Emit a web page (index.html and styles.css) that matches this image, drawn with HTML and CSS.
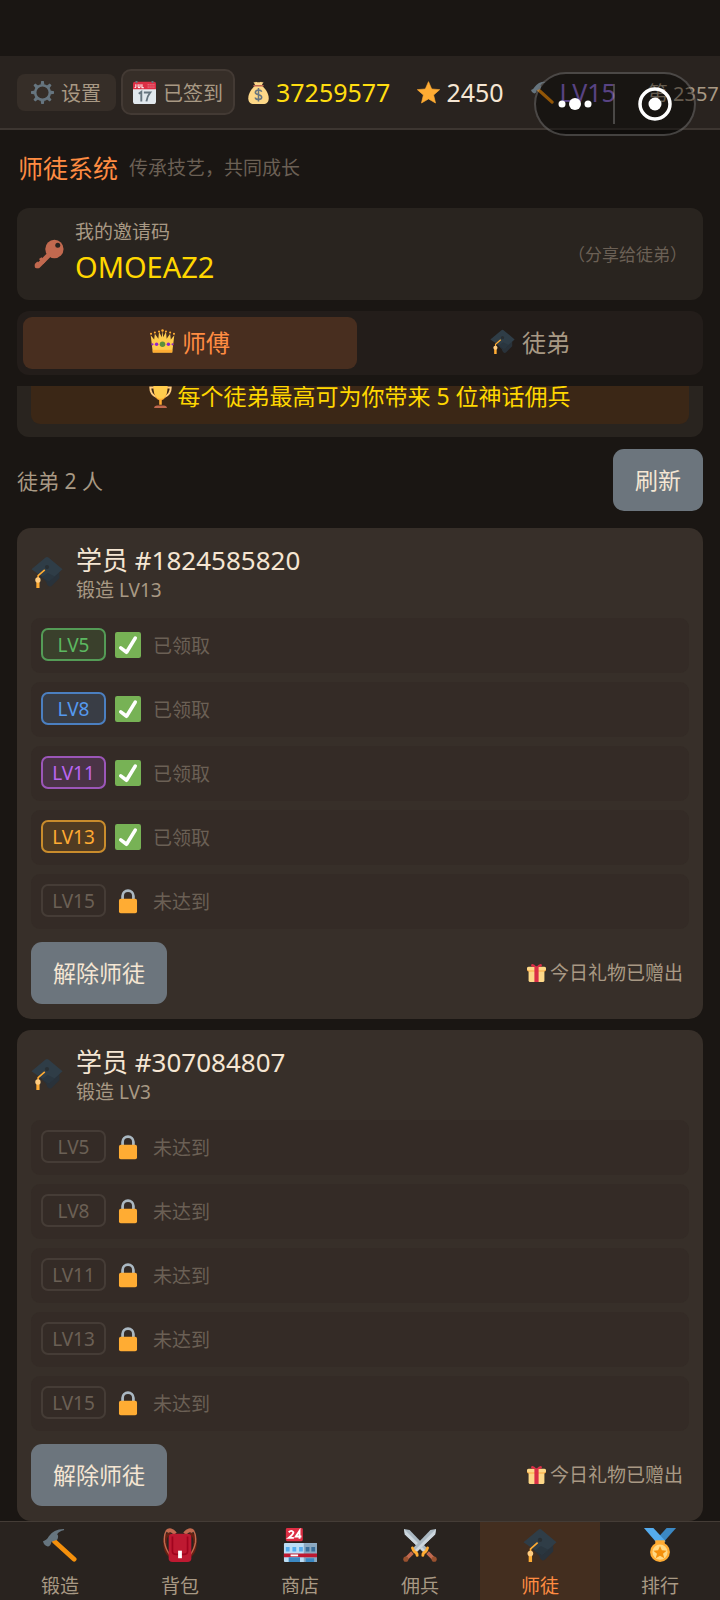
FILE: index.html
```html
<!DOCTYPE html>
<html lang="zh-CN">
<head>
<meta charset="utf-8">
<meta name="viewport" content="width=device-width, initial-scale=1">
<title>师徒系统</title>
<link rel="stylesheet" href="styles.css">
</head>
<body>
<svg class="sprite" aria-hidden="true">
  <symbol id="gear" viewBox="0 0 36 36">
    <g fill="#66757f"><g id="teeth"><path d="M16 0h4l1 6h-6zM16 36h4l1-6h-6z"/><path d="M0 16v4l6 1v-6zM36 16v4l-6 1v-6z"/></g><use href="#teeth" transform="rotate(45 18 18)"/></g>
    <circle cx="18" cy="18" r="11.500" fill="none" stroke="#66757f" stroke-width="4"/>
  </symbol>
  <symbol id="calendar" viewBox="0 0 36 36">
    <path d="M0 11h36v21a4 4 0 0 1-4 4H4a4 4 0 0 1-4-4z" fill="#e1e8ed"/>
    <path d="M0 13V4a3 3 0 0 1 3-3h30a3 3 0 0 1 3 3v9z" fill="#dd2e44"/>
    <path d="M4 0h3v3H4zM29 0h3v3h-3z" fill="#66757f"/>
    <path d="M4.500 5v4q0 1.500-2 1M8 5v4q0 1.500 1.500 1.500T11 9V5M14 5v5.500h3" fill="none" stroke="#fff" stroke-width="1.600"/>
    <path d="M23 6h11M23 9.500h11" stroke="#f4abba" stroke-width="1.500" stroke-dasharray="1.500 1.500"/>
    <path d="M9 20l4-3v15M17 18h10q-5 6-6 14" fill="none" stroke="#66757f" stroke-width="3"/>
  </symbol>
  <symbol id="moneybag" viewBox="0 0 36 36">
    <path d="M12 8h12c4 4 10 11 10 19 0 6-3 9-9 9H11c-6 0-9-3-9-9 0-8 6-15 10-19z" fill="#fdd888"/>
    <path d="M10 1q2 2 4 0 4 2 8 0 2 2 4 0l-3 6H13z" fill="#fdd888"/>
    <path d="M11 7.500h14" stroke="#bf6952" stroke-width="2.500" stroke-linecap="round"/>
    <path d="M23 17q-1-3-5-3t-5 3.500q0 3 5 4t5 4q0 3.500-5 3.500t-5-3M18 11v21" fill="none" stroke="#67757f" stroke-width="2.400"/>
  </symbol>
  <symbol id="star" viewBox="0 0 36 36">
    <path d="M18 1l5 11.500 12.500 1-9.500 8.500 3 12.500L18 28 7 34.500 10 22 .5 13.500l12.500-1z" fill="#ffac33" stroke="#ffac33" stroke-linejoin="round"/>
  </symbol>
  <symbol id="hammer" viewBox="0 0 36 36">
    <path d="M12 14l21 19" stroke="#f4900c" stroke-width="5" stroke-linecap="round"/>
    <path d="M0 14q4-1 6-5Q11 1 22 1q1 .5 0 1.500-5 1-7 4 2 2 0 6l-6 2q-1 5-4 5-4-1-5-5.500z" fill="#66757f"/>
  </symbol>
  <symbol id="key" viewBox="0 0 36 36">
    <path d="M20 17L5 32" stroke="#c1694f" stroke-width="6" stroke-linecap="round"/>
    <path d="M1 30l3-3 4 4-4 4q-4 1-3-5zM6 24l3-2 5 5-3 3z" fill="#c1694f"/>
    <circle cx="24.500" cy="12" r="11" fill="#c1694f"/>
    <circle cx="28.500" cy="7.500" r="3" fill="#292420"/>
  </symbol>
  <symbol id="crown" viewBox="0 0 36 36">
    <path d="M4 34L1 9l5 6 1-8 5 7 1-10 4 8 1-10 1 10 4-8 1 10 5-7 1 8 5-6-3 25z" fill="#ffcc4d"/>
    <path d="M4 30h28v4H4z" fill="#ffac33"/>
    <g fill="#ffac33"><circle cx="1.500" cy="7" r="1.500"/><circle cx="7" cy="5" r="1.500"/><circle cx="13" cy="3.500" r="1.500"/><circle cx="18" cy="2" r="1.800"/><circle cx="23" cy="3.500" r="1.500"/><circle cx="29" cy="5" r="1.500"/><circle cx="34.500" cy="7" r="1.500"/></g>
    <circle cx="18" cy="22" r="4" fill="#5c913b"/>
    <g fill="#9226c9"><circle cx="9.500" cy="22" r="2.500"/><circle cx="26.500" cy="22" r="2.500"/><circle cx="3.500" cy="22" r="1.600"/><circle cx="32.500" cy="22" r="1.600"/></g>
  </symbol>
  <symbol id="cap" viewBox="0 0 36 36">
    <path d="M8 20l9 9q2 7 6 5l9-9V15z" fill="#29323a"/>
    <path d="M.5 15L16 2q2-2 4 0l15.500 13L22 27q-2 2-4 0z" fill="#2f3d47"/>
    <path d="M12 24l7-5 8 4-5 4q-2 2-4 0z" fill="#2a363f"/>
    <circle cx="18" cy="12.500" r="2.300" fill="#292f33"/>
    <path d="M15.500 15.500L8 22v7" fill="none" stroke="#ffac33" stroke-width="1.800"/>
    <path d="M6 28h3.600v8H6z" fill="#ffac33"/><circle cx="7.800" cy="27" r="3" fill="#ffcc80"/>
  </symbol>
  <symbol id="trophy" viewBox="0 0 36 36">
    <path d="M9 4H2q0 11 10 15M27 4h7q0 11-10 15" fill="none" stroke="#ffcc80" stroke-width="3"/>
    <path d="M7 1h22q0 20-9 23v7h-4v-7Q7 21 7 1z" fill="#ffac33"/>
    <path d="M7 1h22q0 13-5 18-6 5-12 0Q7 14 7 1z" fill="#ffcc4d"/>
    <path d="M8 36q0-4 5-4h10q5 0 5 4z" fill="#c1694f"/>
  </symbol>
  <symbol id="check" viewBox="0 0 36 36">
    <rect width="36" height="36" rx="3" fill="#77b255"/>
    <path d="M8 22l8 6L28 8.500" fill="none" stroke="#fff" stroke-width="5" stroke-linecap="round" stroke-linejoin="round"/>
  </symbol>
  <symbol id="lock" viewBox="0 0 36 36">
    <path d="M10.500 18v-7a7.500 7.500 0 0 1 15 0v7" fill="none" stroke="#aab8c2" stroke-width="3.800"/>
    <rect x="5.500" y="15" width="25" height="20" rx="2.500" fill="#ffac33"/>
  </symbol>
  <symbol id="gift" viewBox="0 0 36 36">
    <path d="M3 14h30v19a3 3 0 0 1-3 3H6a3 3 0 0 1-3-3z" fill="#fdd888"/>
    <rect y="8" width="36" height="8" rx="3" fill="#fcab40"/>
    <rect y="7" width="36" height="7" rx="3" fill="#fdd888"/>
    <path d="M14 7h8v29h-8z" fill="#da2f47"/>
    <path d="M18 7Q6 9 8 3q3-4 10 4zM18 7q12 2 10-4-3-4-10 4z" fill="#da2f47"/>
  </symbol>
  <symbol id="backpack" viewBox="0 0 36 36">
    <path d="M8 6Q2 7 2 15q0 10 5 14M28 6q6 1 6 9 0 10-5 14" fill="none" stroke="#662113" stroke-width="3.500"/>
    <path d="M13 5Q6-1 3 4 1 8 1.500 15 3 23 7 28M23 5q7-6 10-1 2 4 1.500 11Q33 23 29 28" fill="none" stroke="#c1694f" stroke-width="1.500"/>
    <path d="M13 6Q8 0 4 4M23 6q5-6 9-2" fill="none" stroke="#c1694f" stroke-width="4"/>
    <rect x="6" y="6" width="24" height="30" rx="4" fill="#be1931"/>
    <path d="M10 9v16q0 3 4 3h8q4 0 4-3V9" fill="none" stroke="#a0041e" stroke-width="1.800"/>
    <rect x="16" y="24" width="4" height="8" fill="#fff"/>
  </symbol>
  <symbol id="shop" viewBox="0 0 36 36">
    <rect x="1" y="16" width="35" height="20" rx="1" fill="#bbddf5"/>
    <path d="M22 16h14v20H22z" fill="#8ba9c1"/>
    <path d="M3 20h4v5H3zM10 20h4v5h-4zM17 20h4v5h-4z" fill="#55acee"/>
    <path d="M24 20h4v5h-4zM30 20h4v5h-4z" fill="#3b6e99"/>
    <path d="M1 27h35v4H1z" fill="#be1931"/><path d="M8 29h8" stroke="#fff" stroke-width="2"/>
    <path d="M6 31h12v5H6zM24 32h9v4h-9z" fill="#3b88c3"/>
    <rect x="3" width="18" height="14" rx="1.500" fill="#dd2e44"/>
    <path d="M6 4.500q3-3 5 0 0 2-5 6h5.500M17.500 11.500V3l-4 6h6" fill="none" stroke="#fff" stroke-width="2"/>
  </symbol>
  <symbol id="swords" viewBox="0 0 36 36">
    <g id="sword"><path d="M1 1l6 1 19 20-4 4L2 7z" fill="#aab8c2"/><path d="M1 1l1 6 20 19 2-2z" fill="#ccd6dd"/><path d="M26 26l6 6" stroke="#c1694f" stroke-width="4"/><path d="M21 29q0-3 3-4 1-1 2-4" fill="none" stroke="#ffac33" stroke-width="3" stroke-linecap="round"/><circle cx="33" cy="33" r="2.700" fill="#99512f"/></g>
    <use href="#sword" transform="matrix(-1 0 0 1 36 0)"/>
  </symbol>
  <symbol id="medal" viewBox="0 0 36 36">
    <path d="M35 0H25L15 11l6 5z" fill="#3b88c3"/><path d="M1 0h10l13 14-5 3-5-2z" fill="#55acee"/>
    <path d="M13 13h10v5H13z" fill="#ffac33"/>
    <circle cx="18" cy="25.500" r="10.500" fill="#ffac33"/><circle cx="18" cy="25.500" r="8" fill="#ffd983"/>
    <path d="M18 19l2 4.500 5 .5-3.800 3.200 1.300 4.800-4.500-2.600-4.500 2.600 1.300-4.800L11 24l5-.5z" fill="#f4900c"/>
  </symbol>
</svg>

<div class="app">
  <header class="topbar">
    <button class="chip"><svg class="icon-sm"><use href="#gear"/></svg>设置</button>
    <button class="chip chip-signed"><svg class="icon-sm"><use href="#calendar"/></svg>已签到</button>
    <div class="stats">
      <span class="stat gold"><svg class="icon-sm"><use href="#moneybag"/></svg>37259577</span>
      <span class="stat"><svg class="icon-sm"><use href="#star"/></svg>2450</span>
      <span class="stat level"><svg class="icon-sm"><use href="#hammer"/></svg>LV15</span>
      <span class="rank">第 2357</span>
    </div>
  </header>

  <div class="capsule">
    <button class="capsule-btn" aria-label="更多"><svg class="dots" viewBox="0 0 34 14"><g fill="#fff"><circle cx="4" cy="7" r="3.500"/><circle cx="17" cy="7" r="6"/><circle cx="30" cy="7" r="3.500"/></g></svg></button>
    <button class="capsule-btn" aria-label="关闭"><svg class="target" viewBox="0 0 34 34"><circle cx="17" cy="17" r="15" fill="none" stroke="#fff" stroke-width="3.500"/><circle cx="17" cy="17" r="6.500" fill="#fff"/></svg></button>
  </div>

  <main class="page">
    <div class="heading"><h1>师徒系统</h1><p>传承技艺，共同成长</p></div>

    <section class="invite">
      <svg class="icon-key"><use href="#key"/></svg>
      <div class="invite-main"><div class="invite-label">我的邀请码</div><div class="invite-code">OMOEAZ2</div></div>
      <span class="invite-hint">（分享给徒弟）</span>
    </section>

    <nav class="tabs">
      <button class="tab active"><svg class="icon-tab"><use href="#crown"/></svg>师傅</button>
      <button class="tab"><svg class="icon-tab"><use href="#cap"/></svg>徒弟</button>
    </nav>

    <div class="scroller">
      <section class="promo"><div class="promo-line"><svg class="icon-sm"><use href="#trophy"/></svg>每个徒弟最高可为你带来 5 位神话佣兵</div></section>

      <div class="summary"><span>徒弟 2 人</span><button class="btn">刷新</button></div>

      <article class="card">
        <div class="card-head"><svg class="icon-lg"><use href="#cap"/></svg><div><h2>学员 #1824585820</h2><p>锻造 LV13</p></div></div>
        <ul class="rewards">
          <li><span class="badge green">LV5</span><svg class="icon-md"><use href="#check"/></svg>已领取</li>
          <li><span class="badge blue">LV8</span><svg class="icon-md"><use href="#check"/></svg>已领取</li>
          <li><span class="badge purple">LV11</span><svg class="icon-md"><use href="#check"/></svg>已领取</li>
          <li><span class="badge orange">LV13</span><svg class="icon-md"><use href="#check"/></svg>已领取</li>
          <li><span class="badge">LV15</span><svg class="icon-md"><use href="#lock"/></svg>未达到</li>
        </ul>
        <div class="card-foot"><button class="btn">解除师徒</button><span class="gift"><svg class="icon-xs"><use href="#gift"/></svg>今日礼物已赠出</span></div>
      </article>

      <article class="card">
        <div class="card-head"><svg class="icon-lg"><use href="#cap"/></svg><div><h2>学员 #307084807</h2><p>锻造 LV3</p></div></div>
        <ul class="rewards">
          <li><span class="badge">LV5</span><svg class="icon-md"><use href="#lock"/></svg>未达到</li>
          <li><span class="badge">LV8</span><svg class="icon-md"><use href="#lock"/></svg>未达到</li>
          <li><span class="badge">LV11</span><svg class="icon-md"><use href="#lock"/></svg>未达到</li>
          <li><span class="badge">LV13</span><svg class="icon-md"><use href="#lock"/></svg>未达到</li>
          <li><span class="badge">LV15</span><svg class="icon-md"><use href="#lock"/></svg>未达到</li>
        </ul>
        <div class="card-foot"><button class="btn">解除师徒</button><span class="gift"><svg class="icon-xs"><use href="#gift"/></svg>今日礼物已赠出</span></div>
      </article>
    </div>
  </main>

  <nav class="bottom-nav">
    <button class="nav-item"><svg class="icon-nav"><use href="#hammer"/></svg>锻造</button>
    <button class="nav-item"><svg class="icon-nav"><use href="#backpack"/></svg>背包</button>
    <button class="nav-item"><svg class="icon-nav"><use href="#shop"/></svg>商店</button>
    <button class="nav-item"><svg class="icon-nav"><use href="#swords"/></svg>佣兵</button>
    <button class="nav-item active"><svg class="icon-nav"><use href="#cap"/></svg>师徒</button>
    <button class="nav-item"><svg class="icon-nav"><use href="#medal"/></svg>排行</button>
  </nav>
</div>
</body>
</html>
```

FILE: styles.css
```css
* { box-sizing: border-box; margin: 0; padding: 0; }
body {
  background: #1a1613;
  color: #f5e6d3;
  font-family: "Noto Sans", "Noto Sans CJK SC", sans-serif;
  font-size: 19px;
}
button { font: inherit; color: inherit; background: none; border: 0; cursor: pointer; }
h1, h2 { font-weight: 400; }
ul { list-style: none; }
svg { flex: none; display: block; }
.sprite { position: absolute; width: 0; height: 0; }

.icon-xs { width: 19px; height: 19px; }
.icon-sm { width: 23px; height: 23px; }
.icon-tab { width: 25px; height: 25px; }
.icon-md { width: 26px; height: 26px; }
.icon-key { width: 30px; height: 30px; }
.icon-lg { width: 32px; height: 34px; }
.icon-nav { width: 34px; height: 34px; }

.app { position: relative; display: flex; flex-direction: column; height: 100vh; padding-top: 56px; overflow: hidden; }

.topbar {
  display: flex;
  align-items: center;
  min-height: 74px;
  padding: 0 0 0 17px;
  background: #29231f;
  border-bottom: 2px solid #3d3631;
  overflow: hidden;
  white-space: nowrap;
}
.chip {
  display: flex;
  flex: none;
  align-items: center;
  gap: 7px;
  height: 37px;
  padding: 0 15px 0 14px;
  border-radius: 8px;
  background: #362e28;
  color: #a89984;
  font-size: 20px;
}
.chip-signed { height: 46px; margin-left: 5px; padding: 0 10px; border: 2px solid #433a34; border-radius: 10px; }
.stats { display: flex; align-items: center; gap: 27px; margin-left: 12px; }
.stat { display: flex; flex: none; align-items: center; gap: 6px; font-size: 25px; }
.gold { color: #ffdd10; }
.level { color: #9370db; }
.rank { flex: none; margin-left: 5px; color: #a89984; font-size: 20px; }

.capsule {
  position: absolute;
  top: 72px;
  right: 24px;
  display: grid;
  grid-template-columns: 1fr 1fr;
  width: 162px;
  height: 64px;
  border: 2px solid rgba(255, 255, 255, 0.22);
  border-radius: 32px;
  background: rgba(0, 0, 0, 0.4);
}
.capsule-btn { display: flex; align-items: center; justify-content: center; margin: 10px 0; }
.capsule-btn:first-child { border-right: 2px solid rgba(255, 255, 255, 0.22); }
.dots { width: 34px; height: 14px; }
.target { width: 34px; height: 34px; }

.page { display: flex; flex: 1; flex-direction: column; min-height: 0; padding: 0 17px; }
.heading { display: flex; align-items: center; gap: 11px; padding: 21px 1px 23px; line-height: 34px; }
.heading h1 { color: #ff8c42; font-size: 25px; }
.heading p { color: #6b6055; }

.invite { display: flex; align-items: center; gap: 11px; padding: 11px 16px 11px 17px; border-radius: 12px; background: #29241f; }
.invite-main { flex: 1; }
.invite-label { color: #a89984; line-height: 26px; }
.invite-code { color: #ffd700; font-size: 29px; line-height: 44px; }
.invite-hint { padding-bottom: 2px; color: #6b6055; font-size: 17px; }

.tabs { display: grid; grid-template-columns: 1fr 1fr; gap: 6px; margin-top: 11px; padding: 6px; border-radius: 12px; background: #231d1a; }
.tab { display: flex; align-items: center; justify-content: center; gap: 7px; height: 52px; padding-bottom: 3px; border-radius: 9px; color: #a89984; font-size: 24px; }
.tab.active { background: #482e1f; color: #ff8c42; }

.scroller { flex: 1; min-height: 0; margin-top: 11px; overflow-y: auto; scrollbar-width: none; }
.promo { margin-top: -29px; padding: 13px 14px; border-radius: 12px; background: #29241f; }
.promo-line { display: flex; align-items: center; justify-content: center; gap: 5px; padding: 11px 12px 13px; border-radius: 9px; background: #3b2716; color: #ffd700; font-size: 23px; line-height: 30px; }

.summary { display: flex; align-items: center; justify-content: space-between; margin: 12px 0 17px; color: #a89984; font-size: 21px; }
.btn { height: 62px; padding: 0 22px 3px 22px; border-radius: 11px; background: #6c757d; color: #f5e6d3; font-size: 23px; }

.card { padding: 14px 14px 15px; border-radius: 14px; background: #372f29; }
.card + .card { margin-top: 11px; }
.card-head { display: flex; align-items: center; gap: 13px; margin-bottom: 16px; }
.card-head h2 { font-size: 26px; line-height: 36px; }
.card-head p { color: #a89984; line-height: 24px; }

.rewards { display: flex; flex-direction: column; gap: 9px; }
.rewards li { display: flex; align-items: center; gap: 12px; height: 55px; padding: 0 10px 2px; border-radius: 9px; background: #342b26; color: #6b6055; }
.badge { display: flex; align-items: center; justify-content: center; width: 65px; height: 33px; border: 2px solid #453c36; border-radius: 7px; }
.badge + svg { margin-left: -3px; }
.green { border-color: #549b56; background: #3a402c; color: #5cb860; }
.blue { border-color: #4b7fc0; background: #393d45; color: #5599ee; }
.purple { border-color: #9b56b8; background: #4a3346; color: #bb66f0; }
.orange { border-color: #c98c2c; background: #503b22; color: #ffaa33; }

.card-foot { display: flex; align-items: center; justify-content: space-between; margin-top: 13px; }
.gift { display: flex; align-items: center; gap: 4px; padding: 0 6px 2px 0; color: #a89984; }

.bottom-nav { display: grid; grid-template-columns: repeat(6, 1fr); border-top: 1px solid #443c36; background: #29231f; }
.nav-item { display: flex; flex-direction: column; align-items: center; gap: 10px; padding-top: 6px; color: #a89984; font-size: 19px; line-height: 28px; }
.nav-item.active { background: #432e1f; color: #ff8c42; }
```
